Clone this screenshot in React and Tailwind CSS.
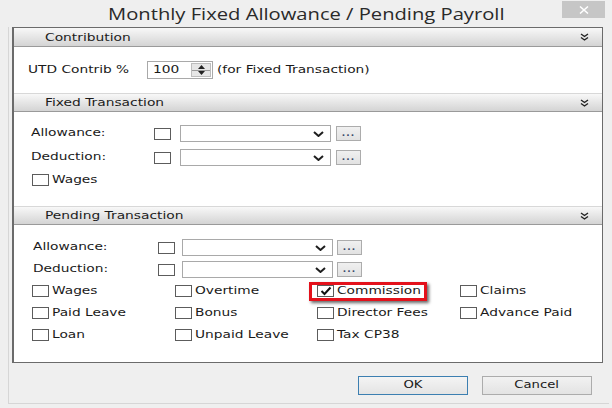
import React from 'react';

// the source capture is stretched horizontally, so text is widened with scale-x
const T = ({ children, className = 'scale-x-[1.25]' }) => (
  <span className={`inline-block origin-left whitespace-nowrap ${className}`}>{children}</span>
);

const Box = ({ checked }) => (
  <span className="w-[17px] h-[12px] border border-[#5c5c5c] bg-white flex items-center justify-center shrink-0">
    {checked && (
      <svg width="12" height="10" viewBox="0 0 12 10">
        <path d="M1.5 5 L4.5 8 L10.5 1.5" fill="none" stroke="#111" strokeWidth="2" />
      </svg>
    )}
  </span>
);

const Header = ({ title, top }) => (
  <div className={`h-[19px] flex items-center justify-between pl-[31px] pr-[13px] bg-linear-to-b from-[#f8f8f8] to-[#d4d4d4] border-b border-[#9a9a9a] text-[10px] text-[#1c1c1c] ${top ? '' : 'border-t border-t-[#d8d8d8]'}`}>
    <T className="scale-x-[1.38]">{title}</T>
    <svg width="9" height="8" viewBox="0 0 9 8">
      <path d="M1 1 L4.5 3.5 L8 1 M1 4.5 L4.5 7 L8 4.5" fill="none" stroke="#222" strokeWidth="1.4" />
    </svg>
  </div>
);

const Combo = () => (
  <div className="w-[151px] h-[17px] border border-[#a9a9a9] bg-white flex items-center justify-end pr-[6px] shrink-0">
    <svg width="11" height="6" viewBox="0 0 11 6">
      <path d="M1 1 L5.5 5 L10 1" fill="none" stroke="#1e1e1e" strokeWidth="2" />
    </svg>
  </div>
);

const Dots = () => (
  <div className="w-[25px] h-[15px] border border-[#acacac] bg-linear-to-b from-[#f0f0f0] to-[#e2e2e2] flex items-center justify-center text-[9px] font-bold leading-none text-[#3a4a6a] tracking-[1px] shrink-0">
    ...
  </div>
);

const LookupRow = ({ label, labelW, gapA, gapB }) => (
  <div className="h-[17px] flex items-center">
    <span className={labelW}><T>{label}</T></span>
    <Box />
    <div className={gapA} />
    <Combo />
    <div className={gapB} />
    <Dots />
  </div>
);

const Check = ({ label, checked, mark }) => (
  <div className="relative h-[16px] flex items-center gap-[3px]">
    {mark && (
      <span className="absolute left-[-8px] top-[-1px] w-[118px] h-[19px] border-[3px] border-[#e3111b] shadow-[2px_2px_3px_rgba(0,0,0,0.6)] pointer-events-none" />
    )}
    <Box checked={checked} />
    <T>{label}</T>
  </div>
);

export default function App() {
  return (
    <div className="w-[612px] h-[408px] bg-[#efefef] flex flex-col font-['DejaVu_Sans',sans-serif] text-[11px] text-[#1a1a1a] overflow-hidden">
      <div className="relative h-[27px] shrink-0 flex items-center justify-center">
        <span className="font-['Open_Sans',sans-serif] text-[16px] text-[#2a2a2a] inline-block whitespace-nowrap scale-x-[1.26]">
          Monthly Fixed Allowance / Pending Payroll
        </span>
        <div className="absolute right-[7px] top-[1px] w-[43px] h-[17px] bg-[#c6c6c6] flex items-center justify-center">
          <svg width="10" height="8" viewBox="0 0 10 8">
            <path d="M1 0.5 L9 7.5 M9 0.5 L1 7.5" stroke="#fff" strokeWidth="1.5" />
          </svg>
        </div>
      </div>

      <div className="flex-1 ml-[8px] mr-[3px] mb-[4px] border-l border-b border-[#d6d6d6] flex flex-col">
        <div className="ml-[3px] mr-[6px] h-[336px] bg-white border border-[#6b6b6b] border-l-2 flex flex-col">
          <Header title="Contribution" top />
          <div className="h-[46px] pt-[14px] pl-[14px]">
            <div className="h-[18px] flex items-center">
              <span className="w-[119px]"><T>UTD Contrib %</T></span>
              <div className="w-[66px] h-[18px] border border-[#a9a9a9] flex">
                <span className="flex-1 pl-[5px] flex items-center"><T>100</T></span>
                <div className="w-[20px] my-[1px] mr-[1px] border border-[#bdbdbd] bg-[#e6e6e6] flex flex-col">
                  <div className="flex-1 flex items-center justify-center border-b border-[#9a9a9a]">
                    <svg width="7" height="4" viewBox="0 0 7 4"><path d="M0 4 L3.5 0 L7 4 Z" fill="#222" /></svg>
                  </div>
                  <div className="flex-1 flex items-center justify-center">
                    <svg width="7" height="4" viewBox="0 0 7 4"><path d="M0 0 L3.5 4 L7 0 Z" fill="#222" /></svg>
                  </div>
                </div>
              </div>
              <span className="ml-[4px]"><T>(for Fixed Transaction)</T></span>
            </div>
          </div>

          <Header title="Fixed Transaction" />
          <div className="h-[94px] pt-[13px] pl-[17px] flex flex-col gap-[7px]">
            <LookupRow label="Allowance:" labelW="w-[123px]" gapA="w-[9px]" gapB="w-[5px]" />
            <LookupRow label="Deduction:" labelW="w-[123px]" gapA="w-[9px]" gapB="w-[5px]" />
            <div className="pl-[1px] -mt-[1px]">
              <Check label="Wages" />
            </div>
          </div>

          <Header title="Pending Transaction" />
          <div className="flex-1 pt-[14px] pl-[19px] flex flex-col gap-[5px]">
            <LookupRow label="Allowance:" labelW="w-[125px]" gapA="w-[7px]" gapB="w-[4px]" />
            <LookupRow label="Deduction:" labelW="w-[125px]" gapA="w-[7px]" gapB="w-[4px]" />
            <div className="-ml-[1px] grid grid-cols-[143px_142px_143px_1fr] gap-y-[6px]">
              <Check label="Wages" />
              <Check label="Overtime" />
              <Check label="Commission" checked mark />
              <Check label="Claims" />
              <Check label="Paid Leave" />
              <Check label="Bonus" />
              <Check label="Director Fees" />
              <Check label="Advance Paid" />
              <Check label="Loan" />
              <Check label="Unpaid Leave" />
              <Check label="Tax CP38" />
            </div>
          </div>
        </div>

        <div className="mt-[13px] flex justify-end gap-[14px] pr-[17px]">
          <button className="w-[110px] h-[19px] border border-[#3c7fb1] bg-linear-to-b from-[#f4f4f4] to-[#e4e4e4] text-[11px] text-[#1a1a1a]">
            <span className="inline-block scale-x-[1.2]">OK</span>
          </button>
          <button className="w-[110px] h-[19px] border border-[#acacac] bg-linear-to-b from-[#f2f2f2] to-[#e3e3e3] text-[11px] text-[#1a1a1a]">
            <span className="inline-block scale-x-[1.2]">Cancel</span>
          </button>
        </div>
      </div>
    </div>
  );
}
